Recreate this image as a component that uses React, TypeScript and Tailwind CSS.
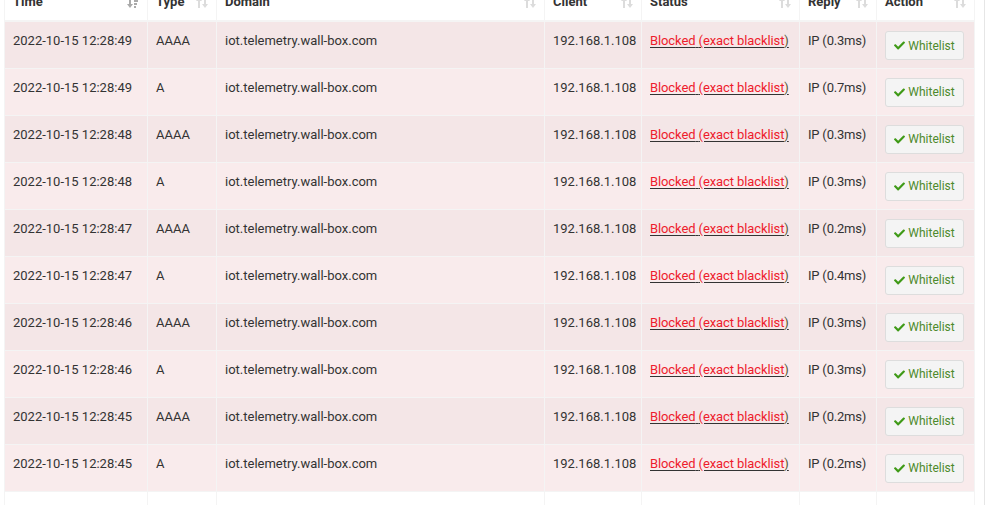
import { FaCheck } from "react-icons/fa";

type Row = { time: string; type: string; reply: string };

const rows: Row[] = [
  { time: "2022-10-15 12:28:49", type: "AAAA", reply: "0.3" },
  { time: "2022-10-15 12:28:49", type: "A", reply: "0.7" },
  { time: "2022-10-15 12:28:48", type: "AAAA", reply: "0.3" },
  { time: "2022-10-15 12:28:48", type: "A", reply: "0.3" },
  { time: "2022-10-15 12:28:47", type: "AAAA", reply: "0.2" },
  { time: "2022-10-15 12:28:47", type: "A", reply: "0.4" },
  { time: "2022-10-15 12:28:46", type: "AAAA", reply: "0.3" },
  { time: "2022-10-15 12:28:46", type: "A", reply: "0.3" },
  { time: "2022-10-15 12:28:45", type: "AAAA", reply: "0.2" },
  { time: "2022-10-15 12:28:45", type: "A", reply: "0.2" },
];

const columns = [
  { label: "Time", width: 143, active: true },
  { label: "Type", width: 69 },
  { label: "Domain", width: 328 },
  { label: "Client", width: 97 },
  { label: "Status", width: 158 },
  { label: "Reply", width: 77 },
  { label: "Action", width: 98 },
];

function SortIcon({ active }: { active?: boolean }) {
  if (active) {
    return (
      <svg width="12" height="11" viewBox="0 0 12 11" className="shrink-0">
        <g fill="#aaa">
          <path d="M2 0h2v7h2l-3 4-3-4h2z" />
          <rect x="7" y="0" width="5" height="2" />
          <rect x="7" y="3" width="4" height="2" />
          <rect x="7" y="6" width="3" height="2" />
          <rect x="7" y="9" width="2" height="2" />
        </g>
      </svg>
    );
  }
  return (
    <svg width="12" height="11" viewBox="0 0 12 11" className="shrink-0">
      <g fill="#dcdcdc">
        <path d="M3 0l3 4H4v7H2V4H0z" />
        <path d="M8 0h2v7h2l-3 4-3-4h2z" />
      </g>
    </svg>
  );
}

const cell = "border border-[#f4f4f4] px-2 pt-[9px] align-top whitespace-nowrap";

export default function App() {
  return (
    <div
      className="h-[505px] w-[985px] overflow-hidden border-r border-[#e6e6e6] bg-white text-[#333]"
      style={{ fontFamily: "Roboto, 'Liberation Sans', sans-serif" }}
    >
      <table className="-mt-[16px] ml-[4px] w-[970px] table-fixed border-collapse text-[13px] leading-5">
        <colgroup>
          {columns.map((c) => (
            <col key={c.label} style={{ width: c.width }} />
          ))}
        </colgroup>
        <thead>
          <tr className="border-b-2 border-[#f4f4f4]">
            {columns.map((c) => (
              <th
                key={c.label}
                className="border-x border-[#f4f4f4] px-2 py-2 text-left font-bold text-[#333]"
              >
                <div className="flex items-center justify-between">
                  <span>{c.label}</span>
                  <SortIcon active={c.active} />
                </div>
              </th>
            ))}
          </tr>
        </thead>
        <tbody>
          {rows.map((r, i) => (
            <tr
              key={i}
              className={`h-[47px] ${i % 2 === 0 ? "bg-[#f4e6e7]" : "bg-[#f9ebec]"}`}
            >
              <td className={cell}>{r.time}</td>
              <td className={cell}>{r.type}</td>
              <td className={cell}>iot.telemetry.wall-box.com</td>
              <td className={cell}>192.168.1.108</td>
              <td className={cell}>
                <span className="tracking-[-0.1px] text-[#ee1c2c] underline decoration-[#333] underline-offset-2">
                  Blocked{" "}
                  <span className="decoration-[#ee1c2c]">(exact blacklist</span>
                  <span className="text-[#553] decoration-[#333]">)</span>
                </span>
              </td>
              <td className={`${cell} tracking-[-0.2px]`}>IP ({r.reply}ms)</td>
              <td className={cell}>
                <button
                  type="button"
                  className="flex h-[29px] w-[79px] items-center justify-center gap-[3px] rounded-[3px] border border-[#ddd] bg-[#f4f4f4] text-[12px] text-[#4d8a2c]"
                >
                  <FaCheck className="h-[11px] w-[11px] text-[#3f9a17]" />
                  Whitelist
                </button>
              </td>
            </tr>
          ))}
          <tr className="h-[47px] bg-white">
            {columns.map((c) => (
              <td key={c.label} className="border border-[#f4f4f4]" />
            ))}
          </tr>
        </tbody>
      </table>
    </div>
  );
}
